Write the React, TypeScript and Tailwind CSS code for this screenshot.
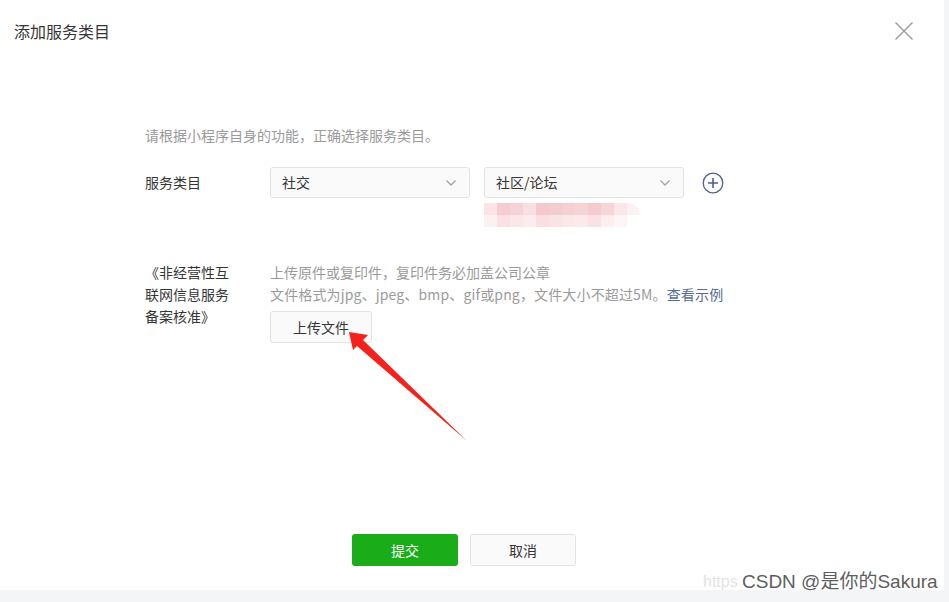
import React from "react";

const font = { fontFamily: '"Noto Sans CJK SC", "Noto Sans", sans-serif' };

function Chevron() {
  return (
    <svg width="12" height="8" viewBox="0 0 12 8" className="shrink-0">
      <path d="M1.5 1.5 L6 6 L10.5 1.5" fill="none" stroke="#a3a3a3" strokeWidth="1.3" />
    </svg>
  );
}

function Select({ value }: { value: string }) {
  return (
    <div className="flex items-center justify-between w-[200px] h-[31px] pl-[11px] pr-[12px] bg-[#fafafa] border border-[#e3e3e3] rounded-[3px] text-[14px] text-[#353535]">
      <span>{value}</span>
      <Chevron />
    </div>
  );
}

const row1 = [
  "bg-[#fbe4e6]", "bg-[#f5cdd1]", "bg-[#f6d2d6]", "bg-[#f9dfe1]", "bg-[#f3c9cd]", "bg-[#f4ccd0]",
  "bg-[#f5cfd3]", "bg-[#f6d3d6]", "bg-[#f4cbcf]", "bg-[#f7d6d9]", "bg-[#fbe7e9]", "bg-[#fdf2f3]",
];
const row2 = [
  "bg-[#fdf0f1]", "bg-[#fae1e3]", "bg-[#fbe6e8]", "bg-[#fceced]", "bg-[#f9dfe2]", "bg-[#fae3e5]",
  "bg-[#fbe6e8]", "bg-[#fce9eb]", "bg-[#fae2e4]", "bg-[#fdeff0]", "bg-[#fef6f6]", "bg-[#ffffff]",
];

export default function App() {
  return (
    <div className="relative w-[949px] h-[602px] bg-[#f4f5f6] overflow-hidden" style={font}>
      <div className="relative flex flex-col w-[944px] h-[590px] bg-white">
        {/* header */}
        <div className="flex items-center justify-between h-[62px] pl-[14px] pr-[30px]">
          <span className="text-[16px] text-[#353535]">添加服务类目</span>
          <svg width="20" height="20" viewBox="0 0 20 20">
            <path d="M1.5 1.5 L18.5 18.5 M18.5 1.5 L1.5 18.5" stroke="#9b9b9b" strokeWidth="1.4" fill="none" />
          </svg>
        </div>

        {/* body */}
        <div className="flex flex-col pl-[145px] mt-[62px]">
          <div className="text-[14px] leading-[22px] text-[#9a9a9a]">
            请根据小程序自身的功能，正确选择服务类目。
          </div>

          <div className="flex items-start mt-[21px]">
            <div className="w-[125px] h-[31px] flex items-center text-[14px] text-[#353535]">服务类目</div>
            <Select value="社交" />
            <div className="flex flex-col ml-[14px]">
              <Select value="社区/论坛" />
              <div className="flex flex-col mt-[5px] w-[156px] h-[24px] rounded-r-[12px] overflow-hidden">
                <div className="flex h-[12px]">
                  {row1.map((c, i) => (
                    <div key={i} className={`w-[13px] h-[12px] ${c}`} />
                  ))}
                </div>
                <div className="flex h-[12px]">
                  {row2.map((c, i) => (
                    <div key={i} className={`w-[13px] h-[12px] ${c}`} />
                  ))}
                </div>
              </div>
            </div>
            <div className="ml-[18px] h-[31px] flex items-center">
              <svg width="22" height="22" viewBox="0 0 22 22">
                <circle cx="11" cy="11" r="9.8" fill="none" stroke="#4f5f8e" strokeWidth="1.3" />
                <path d="M11 6 V16 M6 11 H16" stroke="#4f5f8e" strokeWidth="1.6" />
              </svg>
            </div>
          </div>

          <div className="flex items-start mt-[34px]">
            <div className="w-[125px] text-[14px] leading-[22px] text-[#353535]">
              <div>《非经营性互</div>
              <div>联网信息服务</div>
              <div>备案核准》</div>
            </div>
            <div className="flex flex-col">
              <div className="text-[14px] leading-[22px] text-[#9a9a9a]">上传原件或复印件，复印件务必加盖公司公章</div>
              <div className="text-[14px] leading-[22px] text-[#9a9a9a] tracking-[0.15px]">
                文件格式为jpg、jpeg、bmp、gif或png，文件大小不超过5M。
                <span className="text-[#576b95]">查看示例</span>
              </div>
              <div className="mt-[6px] w-[102px] h-[32px] flex items-center justify-center bg-[#fafafa] border border-[#e3e3e3] rounded-[3px] text-[14px] text-[#353535]">
                上传文件
              </div>
            </div>
          </div>
        </div>

        {/* footer */}
        <div className="mt-auto mb-[24px] flex gap-[12px] pl-[352px]">
          <div className="w-[106px] h-[32px] flex items-center justify-center bg-[#1aad19] rounded-[3px] text-[14px] text-white">
            提交
          </div>
          <div className="w-[106px] h-[32px] flex items-center justify-center bg-[#fafafa] border border-[#e3e3e3] rounded-[3px] text-[14px] text-[#353535]">
            取消
          </div>
        </div>
      </div>

      {/* red annotation arrow */}
      <svg className="absolute left-0 top-0 pointer-events-none" width="949" height="602" viewBox="0 0 949 602">
        <polygon points="349,332 368,335 363,340 467,441 357,346 353,350" fill="#f5221b" />
      </svg>

      {/* watermark */}
      <div className="absolute left-[703px] top-[571px] text-[16px] leading-[22px] text-[#e3e3e3] whitespace-nowrap" style={{ fontFamily: '"Liberation Sans", sans-serif' }}>
        https
      </div>
      <div
        className="absolute left-[742px] top-[569px] text-[19px] leading-[26px] text-[#5e5e5e] whitespace-nowrap [text-shadow:0_0_2px_#ffffff]"
        style={{ fontFamily: '"Liberation Sans", "Noto Sans CJK SC", sans-serif' }}
      >
        CSDN @是你的Sakura
      </div>
    </div>
  );
}
